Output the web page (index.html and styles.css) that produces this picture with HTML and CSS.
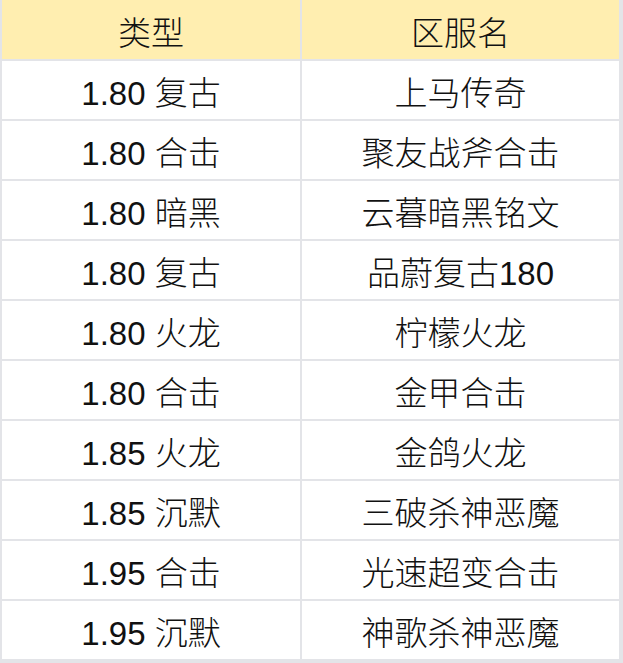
FILE: index.html
```html
<!DOCTYPE html>
<html lang="zh">
<head>
<meta charset="utf-8">
<link rel="stylesheet" href="styles.css">
</head>
<body>
<div class="table">
  <div class="cell head">类型</div><div class="cell head">区服名</div>
  <div class="cell">1.80 复古</div><div class="cell">上马传奇</div>
  <div class="cell">1.80 合击</div><div class="cell">聚友战斧合击</div>
  <div class="cell">1.80 暗黑</div><div class="cell">云暮暗黑铭文</div>
  <div class="cell">1.80 复古</div><div class="cell">品蔚复古180</div>
  <div class="cell">1.80 火龙</div><div class="cell">柠檬火龙</div>
  <div class="cell">1.80 合击</div><div class="cell">金甲合击</div>
  <div class="cell">1.85 火龙</div><div class="cell">金鸽火龙</div>
  <div class="cell">1.85 沉默</div><div class="cell">三破杀神恶魔</div>
  <div class="cell">1.95 合击</div><div class="cell">光速超变合击</div>
  <div class="cell">1.95 沉默</div><div class="cell">神歌杀神恶魔</div>
</div>
</body>
</html>
```

FILE: styles.css
```css
html, body {
  margin: 0;
  padding: 0;
  background: #e3e4e8;
}
body {
  width: 623px;
  height: 663px;
  overflow: hidden;
}
.table {
  display: grid;
  grid-template-columns: 298px 317px;
  grid-template-rows: 59px repeat(10, 58px);
  gap: 2px;
  padding: 0 4px 0 2px;
  background: #e3e4e8;
}
.cell {
  background: #ffffff;
  display: flex;
  align-items: center;
  justify-content: center;
  font-family: "Liberation Sans", "Noto Sans CJK SC", sans-serif;
  font-size: 33px;
  font-weight: 300;
  color: #111111;
  padding-top: 2px;
  box-sizing: border-box;
}
.head {
  background: #ffeeb0;
}
```
